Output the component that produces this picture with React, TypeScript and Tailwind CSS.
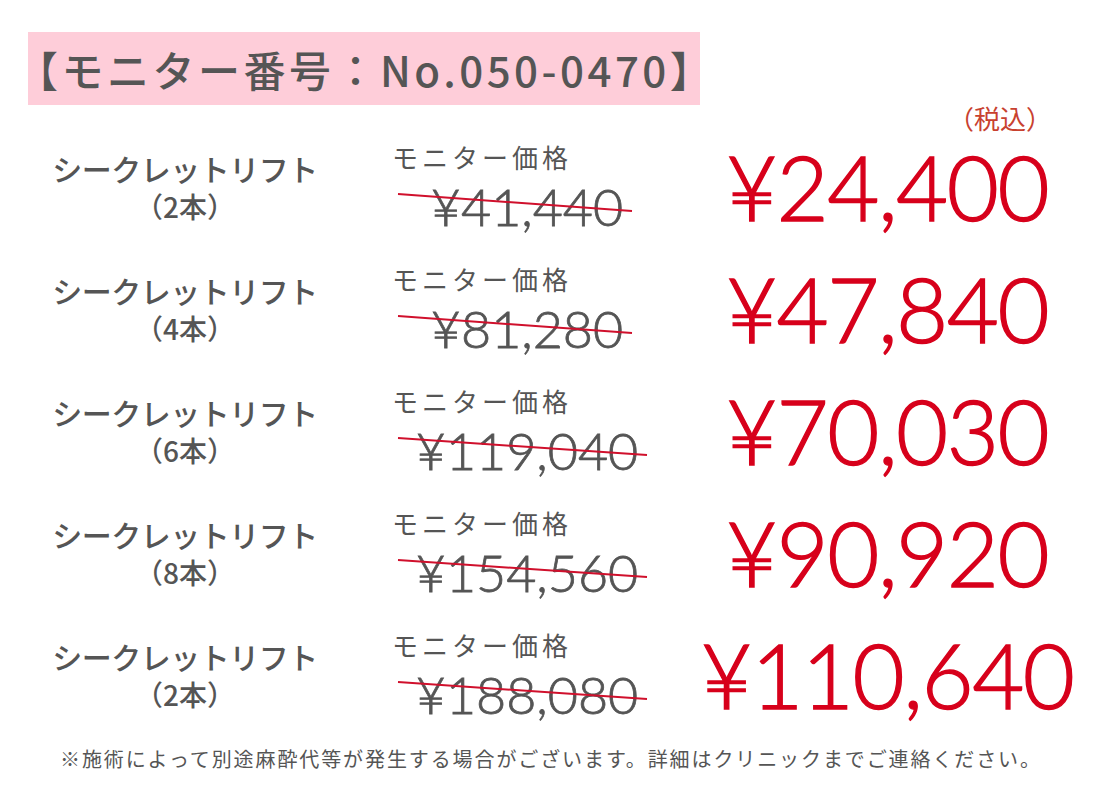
const rows = [
  { count: "2本", was: "¥41,440", now: "¥24,400" },
  { count: "4本", was: "¥81,280", now: "¥47,840" },
  { count: "6本", was: "¥119,040", now: "¥70,030" },
  { count: "8本", was: "¥154,560", now: "¥90,920" },
  { count: "2本", was: "¥188,080", now: "¥110,640" },
];

const jp = "font-['Noto_Sans_CJK_JP',sans-serif]";
const num = "font-['Lato','Noto_Sans_CJK_JP',sans-serif]";

function PriceRow({
  count,
  was,
  now,
  first,
}: {
  count: string;
  was: string;
  now: string;
  first?: boolean;
}) {
  const long = was.length > 7;
  return (
    <div className="flex h-[122px] items-center">
      <div className={`flex w-[330px] flex-col items-center pl-[40px] text-[#555] ${jp}`}>
        <div className="text-[30px] font-medium leading-[40px] tracking-[-0.5px]">
          シークレットリフト
        </div>
        <div className="text-[28px] font-medium leading-[36px]">（{count}）</div>
      </div>
      <div className="relative ml-[62px] flex w-[270px] flex-col">
        <div className={`h-[32px] text-[26px] leading-[32px] tracking-[4px] text-[#555] ${jp}`}>
          モニター価格
        </div>
        <div className="mt-[7px] flex h-[52px] justify-center">
          <span
            className={`text-[52px] leading-[52px] font-light text-[#555] [-webkit-text-stroke:0.8px_#555] ${num}`}
          >
            {was}
          </span>
        </div>
        <svg className="absolute left-0 top-0 h-[91px] w-[270px]" viewBox="0 0 270 91">
          <line
            x1="6"
            y1="53"
            x2={long ? 255 : 240}
            y2="70"
            stroke="#d0102c"
            strokeWidth="2"
          />
        </svg>
      </div>
      <div className="relative ml-[12px] flex w-[426px] justify-center">
        {first && (
          <span
            className={`absolute right-[48px] top-[-39px] text-[26px] leading-[32px] text-[#c8412f] ${jp}`}
          >
            （税込）
          </span>
        )}
        <span
          className={`text-[90px] leading-[90px] font-light tracking-[-1.5px] text-[#d7001b] [-webkit-text-stroke:1.4px_#d7001b] ${num}`}
        >
          {now}
        </span>
      </div>
    </div>
  );
}

export default function App() {
  return (
    <div className="h-[800px] w-[1100px] bg-white">
      <div className="pl-[28px] pt-[32px]">
        <div
          className={`flex h-[73px] w-[672px] items-center bg-[#fecdd9] text-[42px] font-medium tracking-[3.5px] text-[#555] ${jp}`}
        >
          <span className="ml-[-12px]">【モニター番号：No.050-0470】</span>
        </div>
      </div>
      <div className="pt-[20px]">
        {rows.map((r, i) => (
          <PriceRow key={i} {...r} first={i === 0} />
        ))}
      </div>
      <div className={`pl-[60px] pt-[9px] text-[20px] tracking-[1.9px] text-[#555] ${jp}`}>
        ※施術によって別途麻酔代等が発生する場合がございます。詳細はクリニックまでご連絡ください。
      </div>
    </div>
  );
}
